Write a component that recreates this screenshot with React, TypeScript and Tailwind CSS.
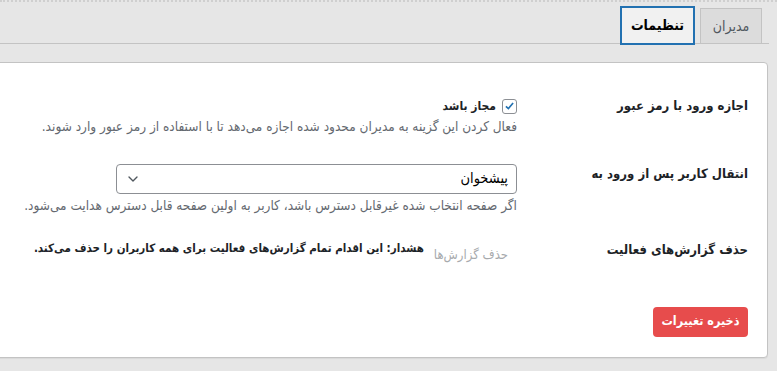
import React from "react";
import { ChevronDown } from "lucide-react";

export default function App() {
  return (
    <div
      dir="rtl"
      className="min-h-[371px] overflow-hidden whitespace-nowrap border-t-2 border-dotted border-[#cfcfcf] bg-[#e6e6e6] pr-[8px] font-['DejaVu_Sans_Condensed','DejaVu_Sans',sans-serif] text-[13.5px] text-[#1d2327]"
    >
      {/* تب‌ها */}
      <div className="flex h-[42px] items-end gap-[5px] border-b border-[#c3c3c3] pr-[7px]">
        <div className="flex h-[35px] w-[62px] items-center justify-center border border-b-0 border-[#c3c3c3] bg-[#dcdcdc] text-[14px] text-[#50575e]">
          مدیران
        </div>
        <div className="-mb-[2px] flex h-[39px] w-[75px] items-center justify-center border-2 border-[#2271b1] bg-[#f1f1f1] text-[14px] font-bold text-black">
          تنظیمات
        </div>
      </div>

      {/* پنل تنظیمات */}
      <div className="-ml-[10px] mr-px mt-[18px] h-[296px] rounded-r-[4px] border border-[#c3c3c3] bg-white pr-[19px] pt-[33px] shadow-[0_1px_1px_rgba(0,0,0,0.06)]">
        <div className="flex">
          <div className="w-[231px] shrink-0 text-[13px] font-bold">اجازه ورود با رمز عبور</div>
          <div className="flex-1">
            <label className="mt-[2px] flex h-[16px] items-center gap-[6px] text-[12px] font-bold">
              <span className="flex h-[15px] w-[15px] items-center justify-center rounded-[3px] border border-[#8c8f94] bg-white">
                <svg viewBox="0 0 20 20" className="h-[14px] w-[14px]">
                  <path d="M4.5 10.5 8.3 14 15.5 5.5" fill="none" stroke="#2271b1" strokeWidth="2.6" />
                </svg>
              </span>
              مجاز باشد
            </label>
            <p className="mt-[3px] leading-[18px] text-[#646970]">
              فعال کردن این گزینه به مدیران محدود شده اجازه می‌دهد تا با استفاده از رمز عبور وارد شوند.
            </p>
          </div>
        </div>

        <div className="mt-[29px] flex">
          <div className="w-[231px] shrink-0 text-[13px] font-bold">انتقال کاربر پس از ورود به</div>
          <div className="flex-1">
            <div className="flex h-[30px] w-[401px] items-center justify-between rounded-[4px] border border-[#8c8f94] bg-white px-[8px] text-[14.5px] text-black">
              <span>پیشخوان</span>
              <ChevronDown size={16} strokeWidth={2} className="text-[#50575e]" />
            </div>
            <p className="mt-[2px] leading-[18px] text-[#646970]">
              اگر صفحه انتخاب شده غیرقابل دسترس باشد، کاربر به اولین صفحه قابل دسترس هدایت می‌شود.
            </p>
          </div>
        </div>

        <div className="mt-[26px] flex">
          <div className="w-[231px] shrink-0 text-[13px] font-bold">حذف گزارش‌های فعالیت</div>
          <div className="flex flex-1 items-start gap-[10px]">
            <button className="mr-[9px] pt-[5px] text-[13px] text-[#a7aaad]">حذف گزارش‌ها</button>
            <p className="text-[11.5px] font-bold">
              هشدار: این اقدام تمام گزارش‌های فعالیت برای همه کاربران را حذف می‌کند.
            </p>
          </div>
        </div>

        <div className="mt-[42px] flex">
          <button className="flex h-[30px] w-[95px] items-center justify-center rounded-[4px] bg-[#e74c4c] text-[12.5px] font-bold text-white">
            ذخیره تغییرات
          </button>
        </div>
      </div>
    </div>
  );
}
